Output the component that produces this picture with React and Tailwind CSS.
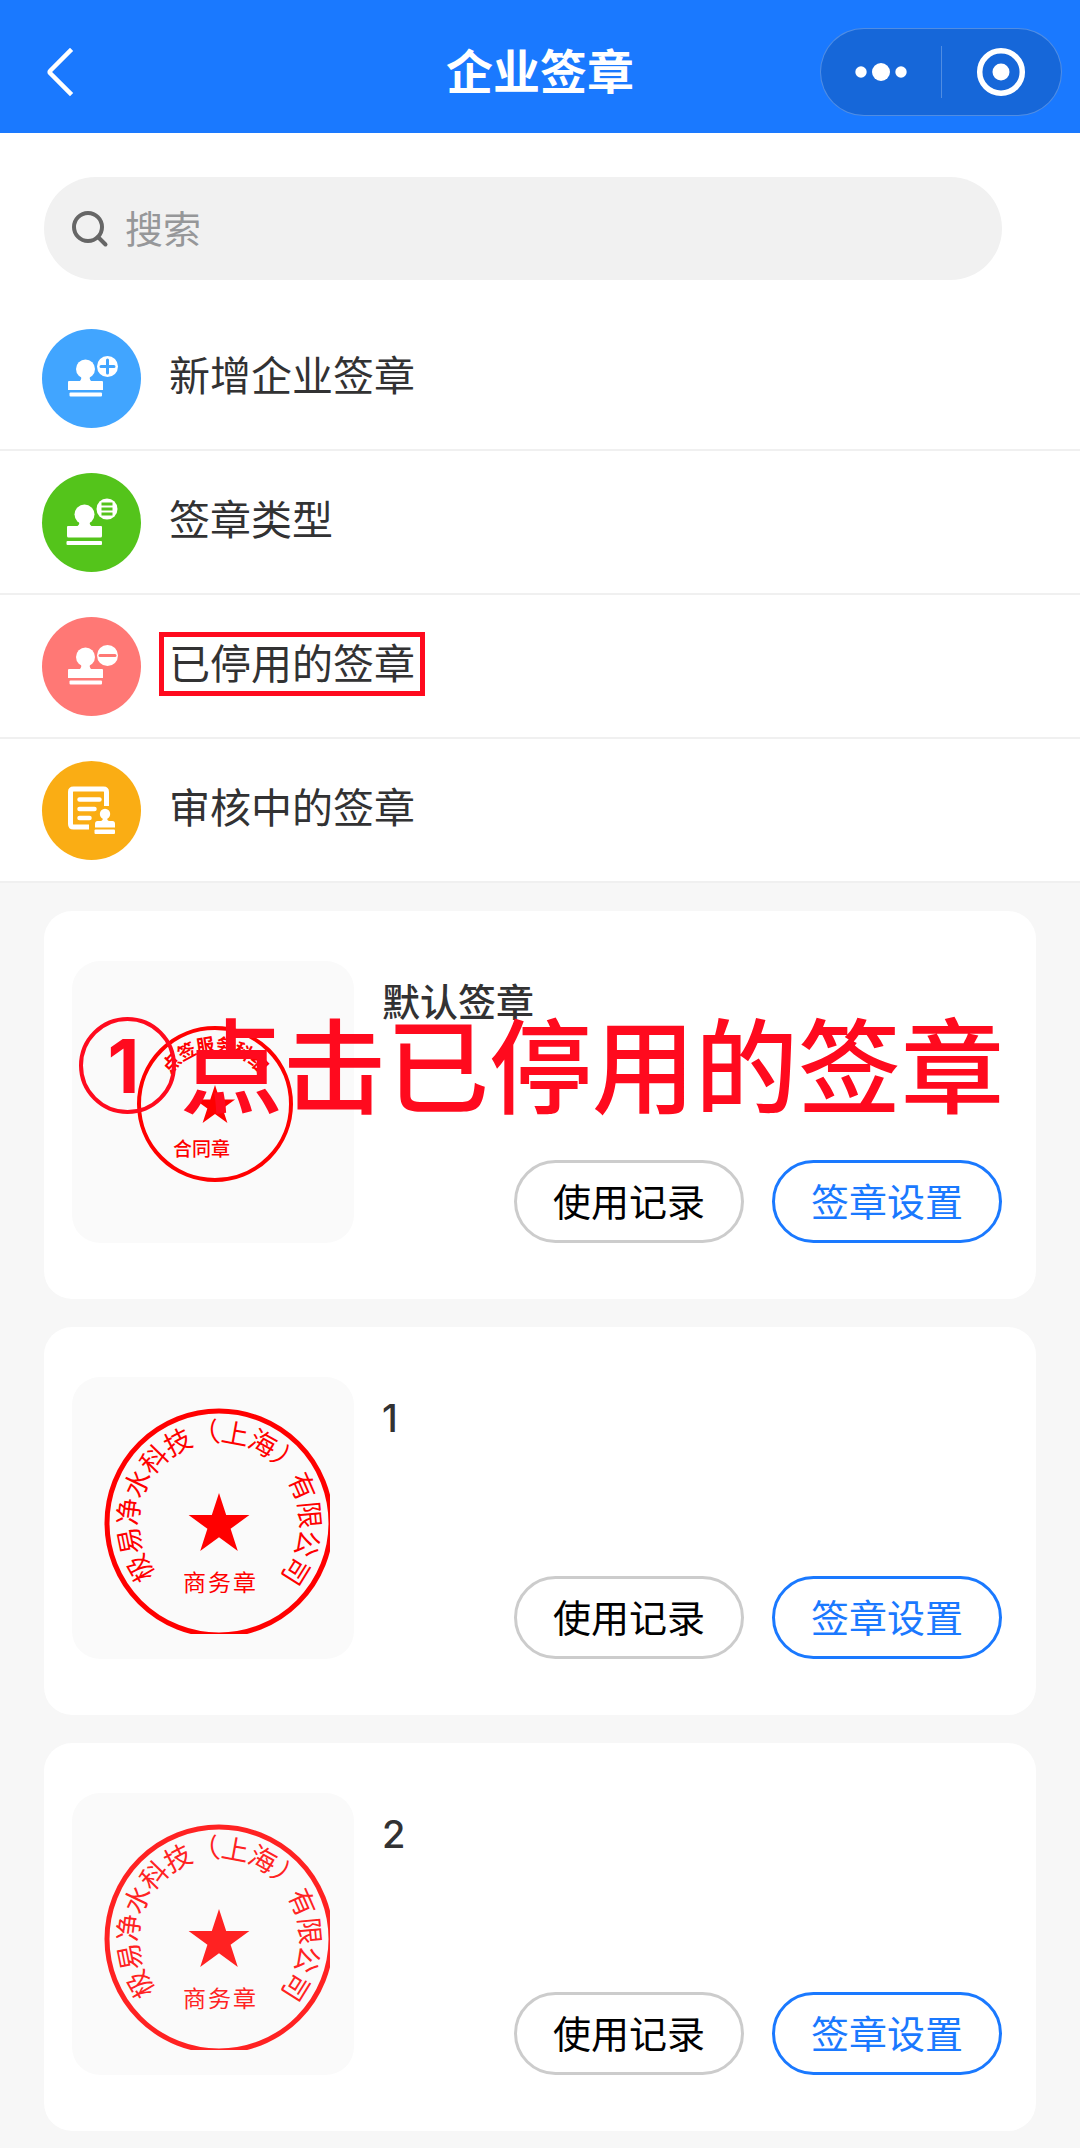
import { useState } from "react";

const menuItems = [
  { label: "新增企业签章", color: "bg-[#41a5ff]", icon: AddStampIcon },
  { label: "签章类型", color: "bg-[#54c41b]", icon: StampTypeIcon },
  { label: "已停用的签章", color: "bg-[#ff7875]", icon: DisabledStampIcon, marked: true },
  { label: "审核中的签章", color: "bg-[#faad14]", icon: ReviewStampIcon },
];

const stamps = [
  { name: "默认签章", seal: SmallSeal },
  { name: "1", seal: CompanySeal, color: "#ff0000" },
  { name: "2", seal: CompanySeal, color: "#ff2222" },
];

const STAR = "M0 -32 L7.2 -9.9 H30.4 L11.6 3.8 L18.8 25.9 L0 12.2 L-18.8 25.9 L-11.6 3.8 L-30.4 -9.9 H-7.2 Z";

function AddStampIcon() {
  return (
    <svg viewBox="0 0 99 99" className="size-full" fill="#fff" aria-hidden="true">
      <circle cx="43.5" cy="40" r="9.5" />
      <path d="M39 46h9c-.6 2.5-.4 4.5 1 6H60q1 0 1 1v8H26v-8q0-1 1-1h11c1.4-1.5 1.6-3.5 1-6z" />
      <rect x="27.5" y="63.5" width="32.5" height="4" rx="1" />
      <circle cx="65.5" cy="37.5" r="10.5" />
      <path d="M65.5 31v13M59 37.5h13" stroke="#41a5ff" strokeWidth="3" strokeLinecap="round" />
    </svg>
  );
}

function StampTypeIcon() {
  return (
    <svg viewBox="0 0 99 99" className="size-full" fill="#fff" aria-hidden="true">
      <circle cx="42.5" cy="41.5" r="10" />
      <path d="M37 48h11c-.6 2-.3 4 1.5 5H59q1 0 1 1v9q0 1.5-1.5 1.5h-32Q25 64.5 25 63v-9q0-1 1-1h9.500c1.8-1 2.1-3 1.5-5z" />
      <rect x="24.5" y="68" width="35.5" height="4" rx="1" />
      <circle cx="65" cy="36" r="10.5" />
      <path d="M59.5 31h11M59.5 36h11M59.5 41h11" stroke="#54c41b" strokeWidth="3" />
    </svg>
  );
}

function DisabledStampIcon() {
  return (
    <svg viewBox="0 0 99 99" className="size-full" fill="#fff" aria-hidden="true">
      <circle cx="43.5" cy="40" r="9.5" />
      <path d="M39 46h9c-.6 2.5-.4 4.5 1 6H60q1 0 1 1v8H26v-8q0-1 1-1h11c1.4-1.5 1.6-3.5 1-6z" />
      <rect x="27.5" y="63.5" width="32.5" height="4" rx="1" />
      <circle cx="65.5" cy="38.5" r="10.5" />
      <path d="M58 38.5h15" stroke="#ff7875" strokeWidth="3" strokeLinecap="round" />
    </svg>
  );
}

function ReviewStampIcon() {
  return (
    <svg viewBox="0 0 99 99" className="size-full" fill="none" aria-hidden="true">
      <path d="M64.5 45V31q0-3-3-3h-30q-3 0-3 3v32q0 3 3 3H47" stroke="#fff" strokeWidth="5" />
      <path d="M37.5 38.5h20M37.5 48h15M37.5 57h10" stroke="#fff" strokeWidth="4.5" strokeLinecap="round" />
      <g fill="#fff">
        <circle cx="63" cy="53" r="5.2" />
        <path d="M61 56h4c-.2 2 .4 3.5 2 4h3.500q2.500 0 2.500 3v3.500H53V63q0-3 2.500-3H59c1.600-.5 2.200-2 2-4z" />
        <rect x="52.5" y="68.5" width="20.5" height="4.5" rx="1" />
      </g>
    </svg>
  );
}

// Characters sit on the ring one by one, evenly spread between two angles
function RingText({ text, cx, cy, radius, from, to, className }) {
  const chars = [...text];
  const step = (to - from) / (chars.length - 1);
  return chars.map((char, i) => (
    <text
      key={i}
      x={cx}
      y={cy - radius}
      textAnchor="middle"
      transform={`rotate(${from + step * i} ${cx} ${cy})`}
      className={className}
    >
      {char}
    </text>
  ));
}

function SmallSeal() {
  return (
    <svg viewBox="0 0 282 282" className="size-full" fill="#ff0000" role="img" aria-label="合同章">
      <circle cx="143" cy="143" r="76" fill="none" stroke="#ff0000" strokeWidth="4" />
      <RingText text="点签服务科细" cx={143} cy={143} radius={53} from={-47} to={47} className="text-[18px] font-bold" />
      <path d={STAR} transform="translate(143 145) scale(0.66)" />
      <text x="101" y="195" className="text-[19px] font-medium">合同章</text>
    </svg>
  );
}

function CompanySeal({ color }) {
  return (
    <svg viewBox="0 0 282 282" className="size-full" fill={color} role="img" aria-label="商务章">
      <svg x="32" y="31" width="226" height="226" viewBox="32 32 226 226">
        <circle cx="147" cy="147" r="112" fill="none" stroke={color} strokeWidth="5" />
        <RingText text="极易净水科技（上海）有限公司" cx={147} cy={147} radius={81} from={-120} to={122} className="text-[27px]" />
        <path d={STAR} transform="translate(147 149)" />
        <text x="111 136 161" y="215" className="text-[23px]">商务章</text>
      </svg>
    </svg>
  );
}

function Header() {
  return (
    <header className="grid grid-cols-3 items-center bg-[#1a79ff] px-[18px] pt-7 pb-[17px] text-white">
      <button aria-label="返回" className="ml-5 flex h-[88px] w-12 items-center">
        <svg viewBox="0 0 40 60" className="h-[60px] w-10" fill="none" stroke="#fff" strokeWidth="4.5">
          <path d="M32 9 L12.5 28.5 Q11 30 12.5 31.5 L32 51" strokeLinecap="square" />
        </svg>
      </button>
      <h1 className="text-center text-[47px] leading-[64px] font-bold">企业签章</h1>
      <div className="flex h-[88px] w-[242px] items-center justify-self-end rounded-full border border-white/25 bg-black/15">
        <button aria-label="更多" className="flex flex-1 items-center justify-center">
          <svg viewBox="0 0 56 20" className="h-5 w-14" fill="#fff">
            <circle cx="8" cy="10" r="5.7" />
            <circle cx="28" cy="10" r="9" />
            <circle cx="48" cy="10" r="5.7" />
          </svg>
        </button>
        <span className="h-[52px] w-px bg-white/25" />
        <button aria-label="关闭" className="flex flex-1 items-center justify-center">
          <svg viewBox="0 0 50 50" className="size-[50px]" fill="none">
            <circle cx="25" cy="25" r="21.3" stroke="#fff" strokeWidth="5.5" />
            <circle cx="25" cy="25" r="8.5" fill="#fff" />
          </svg>
        </button>
      </div>
    </header>
  );
}

function SearchBar() {
  const [keyword, setKeyword] = useState("");

  return (
    <div className="pt-11 pr-[78px] pb-[27px] pl-11">
      <label className="flex h-[103px] items-center gap-4 rounded-full bg-[#f1f1f1] px-[27px]">
        <svg viewBox="0 0 38 38" className="size-[38px] shrink-0" fill="none" stroke="#666" strokeWidth="4">
          <circle cx="17" cy="17" r="14" />
          <path d="M27 27l7.5 7.5" strokeLinecap="round" />
        </svg>
        <input
          type="search"
          aria-label="搜索"
          placeholder="搜索"
          value={keyword}
          onChange={(event) => setKeyword(event.target.value)}
          className="min-w-0 flex-1 bg-transparent text-[38px] leading-[52px] outline-none placeholder:text-[#969799]"
        />
      </label>
    </div>
  );
}

function MenuRow({ item }) {
  const Icon = item.icon;
  return (
    <li className="border-b-2 border-[#f0f0f0]">
      <a href="#" className="flex h-[142px] items-center gap-7 pl-[42px]">
        <span className={`size-[99px] shrink-0 rounded-full ${item.color}`}>
          <Icon />
        </span>
        <span className="relative -mt-1 text-[41px] leading-[58px]">
          {item.label}
          {item.marked ? (
            <span className="pointer-events-none absolute -inset-x-[10px] -inset-y-[3px] border-[5px] border-[#ff0a1e]" />
          ) : null}
        </span>
      </a>
    </li>
  );
}

function StampCard({ stamp }) {
  const Seal = stamp.seal;
  return (
    <li className="flex gap-7 rounded-[28px] bg-white pt-[50px] pr-[34px] pb-14 pl-7">
      <div className="size-[282px] shrink-0 rounded-[28px] bg-[#fafafa]">
        <Seal color={stamp.color} />
      </div>
      <div className="flex min-w-0 flex-1 flex-col justify-between">
        <h2 className="pt-[15px] text-[38px] leading-[52px] font-medium">{stamp.name}</h2>
        <div className="flex justify-end gap-7">
          <button className="h-[83px] w-[230px] rounded-full border-[3px] border-[#ccc] text-[38px] leading-[52px] text-black">
            使用记录
          </button>
          <button className="h-[83px] w-[230px] rounded-full border-[3px] border-[#1a79ff] text-[38px] leading-[52px] text-[#1a79ff]">
            签章设置
          </button>
        </div>
      </div>
    </li>
  );
}

function StepNote() {
  return (
    <p className="pointer-events-none absolute top-[134px] left-[79px] flex items-start gap-1 whitespace-nowrap text-[#ff0a1e]">
      <span className="flex size-[97px] items-center justify-center rounded-full border-4 border-current pr-2 text-[74px] leading-none font-bold">
        1
      </span>
      <span className="text-[103px] leading-[104px] font-medium">点击已停用的签章</span>
    </p>
  );
}

export default function App() {
  return (
    <div className="min-h-screen bg-[#f7f7f7] font-['Inter','Noto_Sans_CJK_SC',sans-serif] text-[#323233]">
      <Header />
      <main>
        <div className="bg-white">
          <SearchBar />
          <ul>
            {menuItems.map((item) => (
              <MenuRow key={item.label} item={item} />
            ))}
          </ul>
        </div>
        <section className="relative px-11 pt-7 pb-4">
          <ul className="flex flex-col gap-7">
            {stamps.map((stamp) => (
              <StampCard key={stamp.name} stamp={stamp} />
            ))}
          </ul>
          <StepNote />
        </section>
      </main>
    </div>
  );
}
